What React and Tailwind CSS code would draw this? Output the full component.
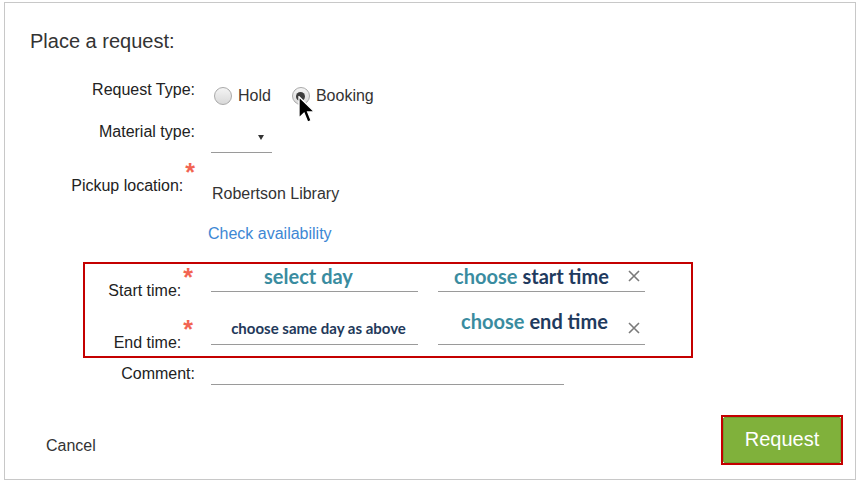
import React from "react";

const font = "font-['Liberation_Sans',Arial,sans-serif] leading-[18px]";
const label = `${font} text-[16px] text-[#222]`;

function Star() {
  return (
    <span className="relative -top-[10px] ml-[2px] font-['Liberation_Sans',Arial,sans-serif] text-[25px] leading-[18px] font-bold text-[#f26452]">
      *
    </span>
  );
}

function Radio({ checked }) {
  return (
    <span className="flex h-[18px] w-[18px] items-center justify-center rounded-full border border-[#a9a9a9] bg-gradient-to-b from-[#f4f4f4] to-[#d9d9d9]">
      {checked && <span className="h-[9px] w-[9px] rounded-full bg-[#3d3d3d]" />}
    </span>
  );
}

function Clear() {
  return (
    <svg width="12" height="12" viewBox="0 0 12 12">
      <path d="M1 1 L11 11 M11 1 L1 11" stroke="#7a7a7a" strokeWidth="1.6" />
    </svg>
  );
}

export default function App() {
  return (
    <div className="h-[483px] w-[861px] bg-white pl-[4px] pt-[2px]">
      <div className="relative h-[478px] w-[852px] border border-[#c8c8c8] bg-white">
        {/* Title */}
        <h1 className="ml-[25px] mt-[27px] font-['Liberation_Sans',Arial,sans-serif] text-[20px] leading-[22px] text-[#333]">
          Place a request:
        </h1>

        {/* Request type */}
        <div className="mt-[28px] flex h-[30px] items-start">
          <div className={`mt-[1px] w-[190px] text-right ${label}`}>Request Type:</div>
          <div className={`ml-[19px] mt-[7px] flex items-center ${font} text-[16px] text-[#333]`}>
            <Radio />
            <span className="ml-[6px]">Hold</span>
            <span className="ml-[21px]" />
            <span className="relative">
              <Radio checked />
              <svg width="18" height="28" viewBox="0 0 13 21" className="absolute left-[6px] top-[9px]">
                <path d="M0.5 0.5 L0.5 16.5 L4.3 12.8 L7 19.5 L9.6 18.4 L7 12 L12.2 12 Z" fill="#000" stroke="#fff" strokeWidth="1" />
              </svg>
            </span>
            <span className="ml-[6px]">Booking</span>
          </div>
        </div>

        {/* Material type */}
        <div className="mt-[12px] flex h-[32px] items-start">
          <div className={`mt-[1px] w-[190px] text-right ${label}`}>Material type:</div>
          <div className="relative ml-[16px] h-[31px] w-[61px] border-b border-[#9a9a9a]">
            <svg width="6" height="5" viewBox="0 0 6 5" className="absolute left-[47px] top-[13px]">
              <path d="M0 0 L6 0 L3 5 Z" fill="#333" />
            </svg>
          </div>
        </div>

        {/* Pickup location */}
        <div className="mt-[19px] flex h-[28px] items-start">
          <div className={`w-[190px] text-right ${label}`}>
            Pickup location:
            <Star />
          </div>
          <div className={`ml-[17px] mt-[12px] ${font} text-[16px] text-[#333]`}>Robertson Library</div>
        </div>

        {/* Check availability */}
        <div className={`ml-[203px] mt-[24px] ${font} text-[16px] text-[#3d87d4]`}>Check availability</div>

        {/* Time box */}
        <div className="ml-[78px] mt-[19px] h-[96px] w-[610px] border-2 border-[#c40000]">
          <div className="flex h-[36px] items-start">
            <div className={`mt-[14px] w-[108px] text-right ${label}`}>
              Start time:
              <Star />
            </div>
            <div className="ml-[18px] h-[28px] w-[207px] border-b border-[#9a9a9a] pr-[12px] text-center font-['Lato',sans-serif] text-[20px] font-bold leading-[24px] text-[#3a8ca0]">
              select day
            </div>
            <div className="relative ml-[20px] flex h-[28px] w-[207px] items-start justify-center border-b border-[#9a9a9a] pr-[20px] font-['Lato',sans-serif] text-[20px] font-bold leading-[24px]">
              <span className="text-[#3a8ca0]">choose</span>
              <span className="ml-[5px] text-[#1f3a5e]">start time</span>
              <span className="absolute right-[5px] top-[6px] flex">
                <Clear />
              </span>
            </div>
          </div>
          <div className="flex h-[45px] items-start">
            <div className={`mt-[30px] w-[108px] text-right ${label}`}>
              End time:
              <Star />
            </div>
            <div className="ml-[18px] h-[45px] w-[207px] whitespace-nowrap border-b border-[#9a9a9a] pl-[8px] pt-[20px] text-center font-['Lato',sans-serif] text-[15px] font-bold leading-[16px] text-[#23395a]">
              choose same day as above
            </div>
            <div className="relative ml-[20px] flex h-[45px] w-[207px] items-start justify-center border-b border-[#9a9a9a] pr-[14px] pt-[9px] font-['Lato',sans-serif] text-[20px] font-bold leading-[24px]">
              <span className="text-[#3a8ca0]">choose</span>
              <span className="ml-[5px] text-[#1f3a5e]">end time</span>
              <span className="absolute right-[5px] top-[22px] flex">
                <Clear />
              </span>
            </div>
          </div>
        </div>

        {/* Comment */}
        <div className="mt-[7px] flex items-start">
          <div className={`w-[190px] text-right ${label}`}>Comment:</div>
          <div className="ml-[16px] h-[20px] w-[353px] border-b border-[#9a9a9a]" />
        </div>

        {/* Footer */}
        <div className="mt-[30px] flex items-start justify-between pr-[12px]">
          <div className={`ml-[41px] mt-[22px] ${font} text-[16px] text-[#333]`}>Cancel</div>
          <div className="h-[50px] w-[122px] border-2 border-[#c40000]">
            <button className="flex h-full w-full items-center justify-center rounded-[2px] border border-[#6f9d31] bg-[#80b13b] pb-[2px] font-['Liberation_Sans',Arial,sans-serif] text-[20px] text-white">
              Request
            </button>
          </div>
        </div>
      </div>
    </div>
  );
}
